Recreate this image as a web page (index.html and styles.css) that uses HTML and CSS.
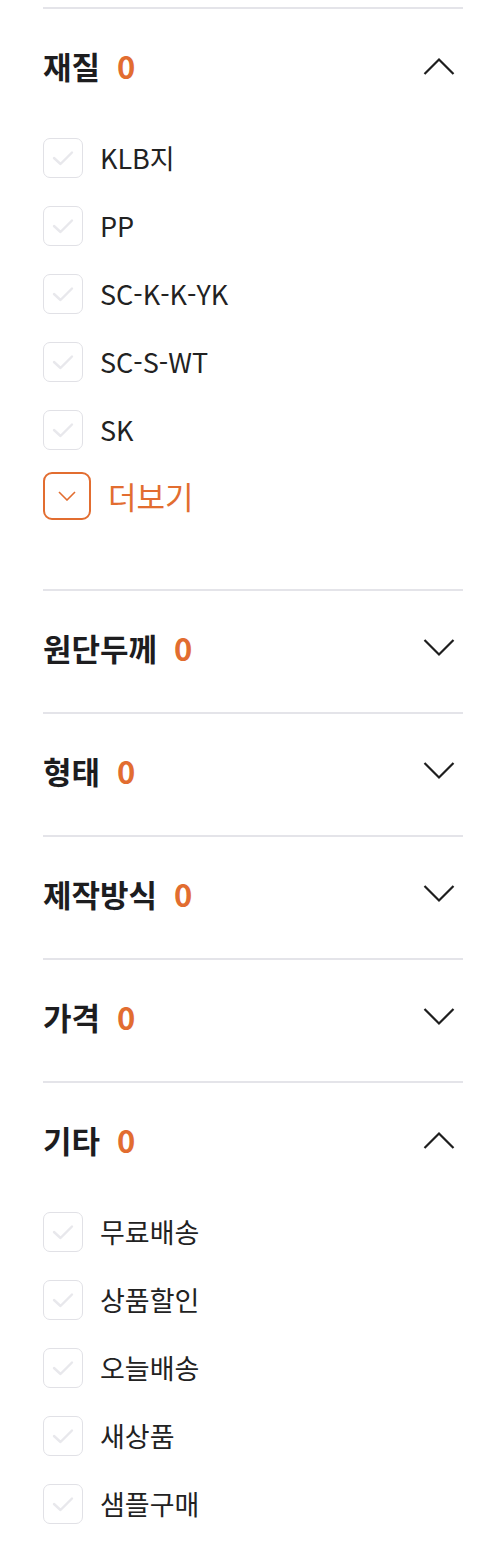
FILE: index.html
```html
<!DOCTYPE html>
<html lang="ko">
<head>
<meta charset="utf-8">
<link rel="stylesheet" href="styles.css">
</head>
<body>
<div class="filters">

  <section class="group open">
    <div class="head">
      <span class="title">재질</span><span class="count">0</span>
      <span class="chev"><svg width="32" height="18" viewBox="0 0 32 18"><polyline points="1.5,17 16,2.5 30.5,17" fill="none" stroke="#1e1e1e" stroke-width="2.2"/></svg></span>
    </div>
    <ul class="list">
      <li class="item"><span class="box"><svg width="22" height="16" viewBox="0 0 22 16"><polyline points="2,8 8.5,14 20,2.5" fill="none" stroke="#e8e8ec" stroke-width="2.4" stroke-linecap="round" stroke-linejoin="round"/></svg></span><span class="label">KLB지</span></li>
      <li class="item"><span class="box"><svg width="22" height="16" viewBox="0 0 22 16"><polyline points="2,8 8.5,14 20,2.5" fill="none" stroke="#e8e8ec" stroke-width="2.4" stroke-linecap="round" stroke-linejoin="round"/></svg></span><span class="label">PP</span></li>
      <li class="item"><span class="box"><svg width="22" height="16" viewBox="0 0 22 16"><polyline points="2,8 8.5,14 20,2.5" fill="none" stroke="#e8e8ec" stroke-width="2.4" stroke-linecap="round" stroke-linejoin="round"/></svg></span><span class="label">SC-K-K-YK</span></li>
      <li class="item"><span class="box"><svg width="22" height="16" viewBox="0 0 22 16"><polyline points="2,8 8.5,14 20,2.5" fill="none" stroke="#e8e8ec" stroke-width="2.4" stroke-linecap="round" stroke-linejoin="round"/></svg></span><span class="label">SC-S-WT</span></li>
      <li class="item"><span class="box"><svg width="22" height="16" viewBox="0 0 22 16"><polyline points="2,8 8.5,14 20,2.5" fill="none" stroke="#e8e8ec" stroke-width="2.4" stroke-linecap="round" stroke-linejoin="round"/></svg></span><span class="label">SK</span></li>
    </ul>
    <div class="more">
      <span class="more-box"><svg width="18" height="10" viewBox="0 0 18 10"><polyline points="1,1 9,9 17,1" fill="none" stroke="#e26d30" stroke-width="1.6"/></svg></span>
      <span class="more-label">더보기</span>
    </div>
  </section>

  <section class="group">
    <div class="head">
      <span class="title">원단두께</span><span class="count">0</span>
      <span class="chev"><svg width="32" height="18" viewBox="0 0 32 18"><polyline points="1.5,1 16,15.5 30.5,1" fill="none" stroke="#1e1e1e" stroke-width="2.2"/></svg></span>
    </div>
  </section>

  <section class="group">
    <div class="head">
      <span class="title">형태</span><span class="count">0</span>
      <span class="chev"><svg width="32" height="18" viewBox="0 0 32 18"><polyline points="1.5,1 16,15.5 30.5,1" fill="none" stroke="#1e1e1e" stroke-width="2.2"/></svg></span>
    </div>
  </section>

  <section class="group">
    <div class="head">
      <span class="title">제작방식</span><span class="count">0</span>
      <span class="chev"><svg width="32" height="18" viewBox="0 0 32 18"><polyline points="1.5,1 16,15.5 30.5,1" fill="none" stroke="#1e1e1e" stroke-width="2.2"/></svg></span>
    </div>
  </section>

  <section class="group">
    <div class="head">
      <span class="title">가격</span><span class="count">0</span>
      <span class="chev"><svg width="32" height="18" viewBox="0 0 32 18"><polyline points="1.5,1 16,15.5 30.5,1" fill="none" stroke="#1e1e1e" stroke-width="2.2"/></svg></span>
    </div>
  </section>

  <section class="group open last">
    <div class="head">
      <span class="title">기타</span><span class="count">0</span>
      <span class="chev"><svg width="32" height="18" viewBox="0 0 32 18"><polyline points="1.5,17 16,2.5 30.5,17" fill="none" stroke="#1e1e1e" stroke-width="2.2"/></svg></span>
    </div>
    <ul class="list">
      <li class="item"><span class="box"><svg width="22" height="16" viewBox="0 0 22 16"><polyline points="2,8 8.5,14 20,2.5" fill="none" stroke="#e8e8ec" stroke-width="2.4" stroke-linecap="round" stroke-linejoin="round"/></svg></span><span class="label">무료배송</span></li>
      <li class="item"><span class="box"><svg width="22" height="16" viewBox="0 0 22 16"><polyline points="2,8 8.5,14 20,2.5" fill="none" stroke="#e8e8ec" stroke-width="2.4" stroke-linecap="round" stroke-linejoin="round"/></svg></span><span class="label">상품할인</span></li>
      <li class="item"><span class="box"><svg width="22" height="16" viewBox="0 0 22 16"><polyline points="2,8 8.5,14 20,2.5" fill="none" stroke="#e8e8ec" stroke-width="2.4" stroke-linecap="round" stroke-linejoin="round"/></svg></span><span class="label">오늘배송</span></li>
      <li class="item"><span class="box"><svg width="22" height="16" viewBox="0 0 22 16"><polyline points="2,8 8.5,14 20,2.5" fill="none" stroke="#e8e8ec" stroke-width="2.4" stroke-linecap="round" stroke-linejoin="round"/></svg></span><span class="label">새상품</span></li>
      <li class="item"><span class="box"><svg width="22" height="16" viewBox="0 0 22 16"><polyline points="2,8 8.5,14 20,2.5" fill="none" stroke="#e8e8ec" stroke-width="2.4" stroke-linecap="round" stroke-linejoin="round"/></svg></span><span class="label">샘플구매</span></li>
    </ul>
  </section>

</div>
</body>
</html>
```

FILE: styles.css
```css
html, body {
  margin: 0;
  padding: 0;
  background: #ffffff;
}

body {
  font-family: "Noto Sans CJK KR", "Noto Sans", sans-serif;
  color: #222222;
}

.filters {
  padding: 7px 23px 0 43px;
}

.group {
  border-top: 2px solid #e4e4e9;
}

.group.open {
  padding-bottom: 69px;
}

.group.last {
  padding-bottom: 40px;
}

.head {
  display: flex;
  align-items: center;
  height: 40px;
  padding: 37px 0 44px;
}

.title {
  font-size: 31px;
  font-weight: 700;
  line-height: 40px;
  color: #1d1d1f;
}

.count {
  font-size: 31px;
  font-weight: 700;
  line-height: 40px;
  color: #e26d30;
  margin-left: 17px;
}

.chev {
  margin-left: auto;
  width: 48px;
  height: 40px;
  display: flex;
  align-items: center;
  justify-content: center;
}

.chev svg {
  display: block;
}

.list {
  list-style: none;
  margin: 0;
  padding: 8px 0 0;
  display: flex;
  flex-direction: column;
  gap: 28px;
}

.item {
  display: flex;
  align-items: center;
  height: 40px;
}

.box {
  width: 40px;
  height: 40px;
  box-sizing: border-box;
  border: 1.5px solid #e1e1e6;
  border-radius: 7px;
  display: flex;
  align-items: center;
  justify-content: center;
  flex-shrink: 0;
}

.box svg {
  display: block;
}

.label {
  margin-left: 17px;
  font-size: 27px;
  line-height: 40px;
  color: #222222;
}

.more {
  display: flex;
  align-items: center;
  margin-top: 22px;
  height: 48px;
}

.more-box {
  width: 48px;
  height: 48px;
  box-sizing: border-box;
  border: 2px solid #e26d30;
  border-radius: 9px;
  display: flex;
  align-items: center;
  justify-content: center;
}

.more-box svg {
  display: block;
}

.more-label {
  margin-left: 17px;
  font-size: 31px;
  line-height: 40px;
  color: #e26d30;
}
```
